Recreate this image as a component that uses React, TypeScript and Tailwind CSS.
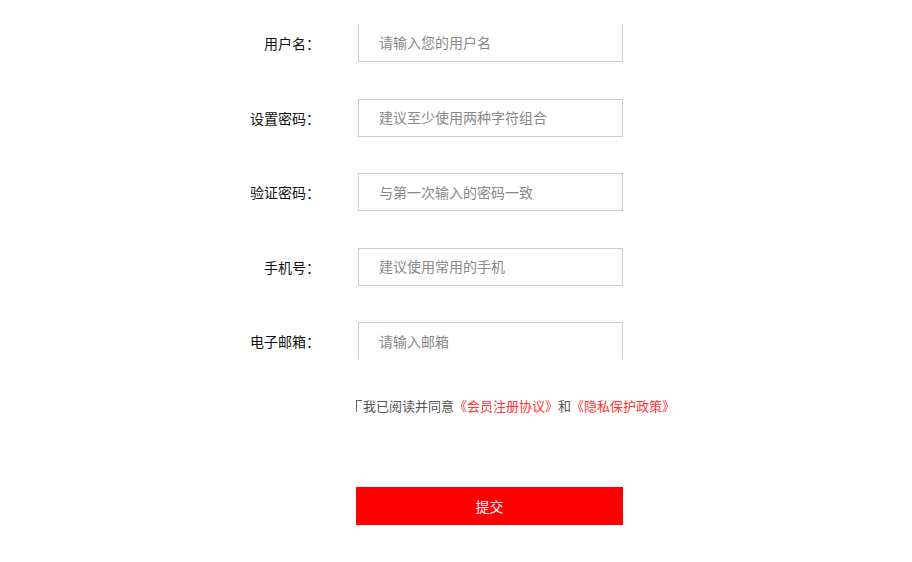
import React from "react";

const fields = [
  { label: "用户名：", placeholder: "请输入您的用户名" },
  { label: "设置密码：", placeholder: "建议至少使用两种字符组合" },
  { label: "验证密码：", placeholder: "与第一次输入的密码一致" },
  { label: "手机号：", placeholder: "建议使用常用的手机" },
  { label: "电子邮箱：", placeholder: "请输入邮箱" },
];

export default function App() {
  return (
    <div
      className="w-[912px] h-[562px] bg-white overflow-hidden"
      style={{ fontFamily: '"Noto Sans CJK SC", "Liberation Sans", sans-serif' }}
    >
      {/* 表单 */}
      <div className="flex flex-col gap-[36.5px] pt-[24px] pl-[202px]">
        {fields.map((f, i) => {
          const first = i === 0;
          const last = i === fields.length - 1;
          return (
            <div key={f.label} className="flex flex-row items-center">
              <label className="w-[118px] text-right text-[14px] text-[#111] leading-none">
                {f.label}
              </label>
              <div
                className={`ml-[38px] w-[265px] border-[#cccccc] flex items-center pl-[20px] text-[14px] text-[#888] ${
                  first
                    ? "h-[38px] border-l border-r border-b"
                    : last
                      ? "h-[37px] border-l border-r border-t"
                      : "h-[38px] border"
                }`}
              >
                {f.placeholder}
              </div>
            </div>
          );
        })}
      </div>

      {/* 协议 */}
      <div className="flex flex-row items-center pl-[356px] mt-[40px] text-[13px] leading-none">
        <span className="w-[6px] h-[12px] border-l border-t border-[#666] mr-[1px]" />
        <span className="text-[#555]">我已阅读并同意</span>
        <span className="text-[#ff3333]">《会员注册协议》</span>
        <span className="text-[#555]">和</span>
        <span className="text-[#ff3333]">《隐私保护政策》</span>
      </div>

      {/* 提交 */}
      <div className="pl-[356px] mt-[75px]">
        <button className="w-[267px] h-[38px] bg-[#ff0000] text-white text-[14px]">
          提交
        </button>
      </div>
    </div>
  );
}
